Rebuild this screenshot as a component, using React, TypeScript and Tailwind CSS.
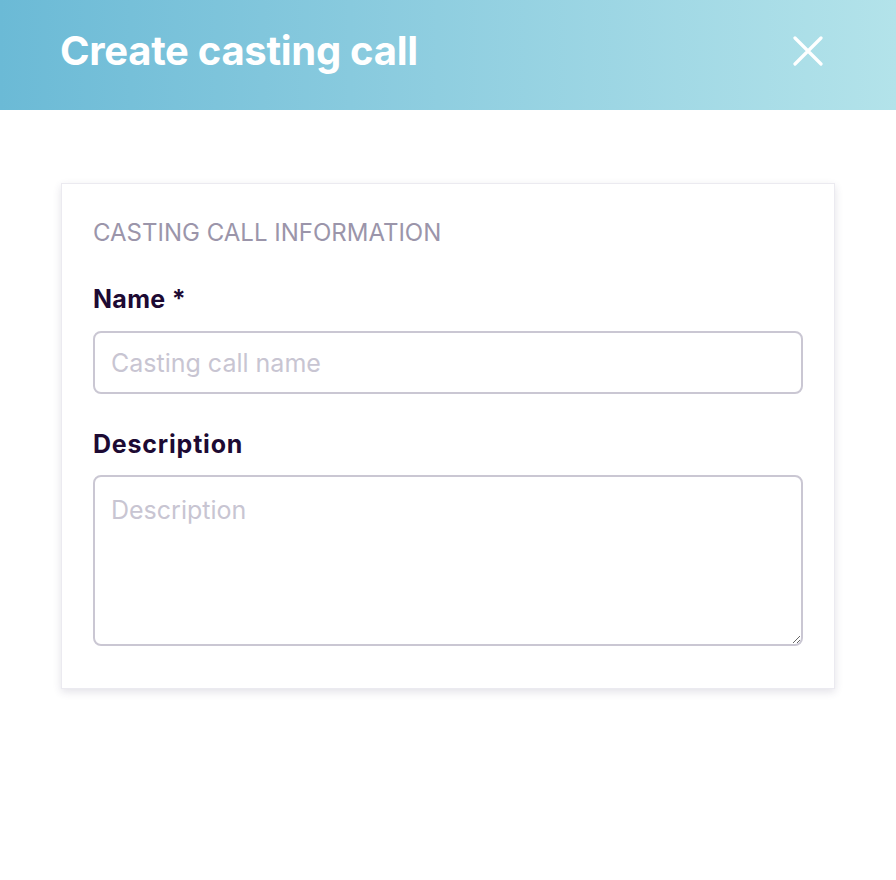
import React from "react";

export default function App() {
  return (
    <div className="w-[896px] h-[880px] bg-white" style={{ fontFamily: "Inter, 'Noto Sans', sans-serif" }}>
      <div className="h-[110px] flex items-center justify-between pl-[60px] pr-[73px] pb-[9px] bg-gradient-to-r from-[#6bbad6] to-[#b3e3ea]">
        <h1 className="text-[40px] font-bold text-white tracking-[-0.3px] leading-none">Create casting call</h1>
        <svg width="30" height="30" viewBox="0 0 30 30" className="text-white">
          <path d="M2 2 L28 28 M28 2 L2 28" stroke="currentColor" strokeWidth="3.2" strokeLinecap="round" />
        </svg>
      </div>
      <div className="pt-[73px] px-[61px]">
        <div className="border border-[#ebeaf0] shadow-[0_3px_8px_rgba(60,50,90,0.14)] bg-white px-[31px] pt-[34px] pb-[42px]">
          <div className="text-[24px] leading-[30px] text-[#9b95aa] uppercase">Casting call information</div>
          <label className="block mt-[36px] text-[25px] leading-[30px] font-bold tracking-[0.3px] text-[#1d0a33]">Name *</label>
          <input
            placeholder="Casting call name"
            className="block mt-[17px] w-full h-[63px] rounded-[8px] border-2 border-[#cac7d3] px-[16px] text-[25px] placeholder:text-[#c8c5d2] outline-none"
          />
          <label className="block mt-[35px] text-[25px] leading-[30px] font-bold tracking-[0.8px] text-[#1d0a33]">Description</label>
          <textarea
            placeholder="Description"
            className="block mt-[16px] w-full h-[171px] rounded-[8px] border-2 border-[#cac7d3] px-[16px] py-[18px] text-[25px] leading-[30px] placeholder:text-[#c8c5d2] outline-none"
          />
        </div>
      </div>
    </div>
  );
}
